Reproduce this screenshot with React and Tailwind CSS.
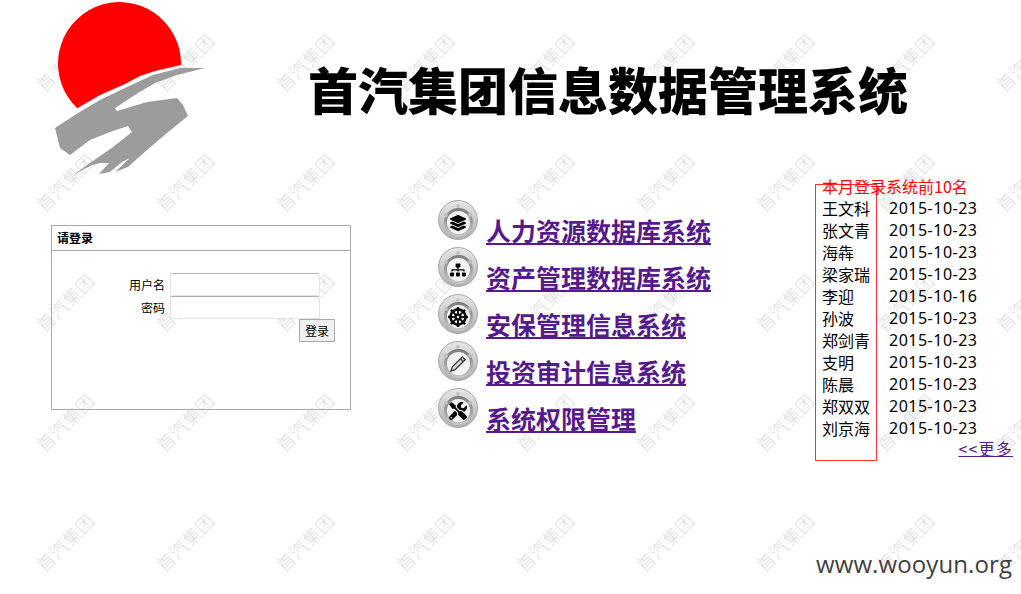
import { FaLayerGroup, FaSitemap, FaDharmachakra, FaTools } from 'react-icons/fa';

const cjk = "font-['Noto_Sans_CJK_SC','Noto_Sans',sans-serif]";

function PenGlyph() {
  return (
    <svg viewBox="0 0 20 20" width="19" height="19">
      <path d="M2 18l1.5-4.5L14 3l3 3L6.5 16.5z" fill="#d4d4d4" stroke="#3a3a3a" strokeWidth="1.4" />
      <path d="M12 5l3 3" stroke="#3a3a3a" strokeWidth="1.4" />
    </svg>
  );
}

const systems = [
  { name: '人力资源数据库系统', glyph: <FaLayerGroup size={16} /> },
  { name: '资产管理数据库系统', glyph: <FaSitemap size={16} /> },
  { name: '安保管理信息系统', glyph: <FaDharmachakra size={20} /> },
  { name: '投资审计信息系统', glyph: <PenGlyph /> },
  { name: '系统权限管理', glyph: <FaTools size={18} /> },
];

const logins = [
  ['王文科', '2015-10-23'],
  ['张文青', '2015-10-23'],
  ['海犇', '2015-10-23'],
  ['梁家瑞', '2015-10-23'],
  ['李迎', '2015-10-16'],
  ['孙波', '2015-10-23'],
  ['郑剑青', '2015-10-23'],
  ['支明', '2015-10-23'],
  ['陈晨', '2015-10-23'],
  ['郑双双', '2015-10-23'],
  ['刘京海', '2015-10-23'],
];

function Logo() {
  return (
    <svg viewBox="55 0 155 178" width="155" height="178" className="block shrink-0">
      <path
        d="M77.3 108.3A61.5 61.5 0 1 1 181 65L155 71 140 76 125 84 100 95Z"
        fill="#ff0000"
      />
      <path
        d="M205 68 177 75 155 83 138 93 115 108 117 111 147 102 177 98 183 105 188 116 167 133 147 150 128 167 115 172 130 158 122 162 110 172 99 174 109 163 100 163 92 165 73 175 90 163 113 147 132 132 128 126 110 132 90 140 70 155 60 148 55 128 78 113 100 100 127 87 153 75 180 68Z"
        fill="#9c9c9c"
      />
    </svg>
  );
}

function SystemIcon({ glyph }) {
  return (
    <div className="relative flex h-10 w-10 shrink-0 items-end justify-center rounded-full border border-[#a8a8a8] bg-gradient-to-b from-[#e6e6e6] to-[#b0b0b0] pb-[2px]">
      <span className="absolute left-[17px] top-[3px] h-[4px] w-[4px] rounded-full bg-[#c4c4c4]" />
      <span className="absolute left-[5px] top-[12px] h-[4px] w-[4px] rounded-full bg-[#bdbdbd]" />
      <span className="absolute right-[5px] top-[12px] h-[4px] w-[4px] rounded-full bg-[#bdbdbd]" />
      <div className="flex h-[29px] w-[29px] items-center justify-center rounded-full bg-gradient-to-b from-[#7c7c7c] to-[#c8c8c8]">
        <div className="flex h-[23px] w-[23px] items-center justify-center rounded-full bg-[#f2f2f2] text-black">
          {glyph}
        </div>
      </div>
    </div>
  );
}

function Watermark() {
  return (
    <div className="absolute left-[5px] top-[2px] grid grid-cols-[repeat(9,120px)] auto-rows-[120px]">
      {Array.from({ length: 45 }, (_, i) => (
        <div key={i} className="flex items-center justify-center">
          <span className={`-rotate-45 whitespace-nowrap text-[18px] font-light text-[#dedede] ${cjk}`}>
            首汽集团
          </span>
        </div>
      ))}
    </div>
  );
}

function LoginBox() {
  return (
    <div className={`mt-[47px] ml-[51px] h-[185px] w-[300px] shrink-0 border border-[#aaaaaa] text-[12px] text-black ${cjk}`}>
      <div className="flex h-[25px] items-center border-b border-[#aaaaaa] pl-[5px] font-bold">请登录</div>
      <div className="grid grid-cols-[113px_150px] gap-x-[5px] pt-[22px]">
        <label className="flex h-[23px] items-center justify-end">用户名</label>
        <input className="h-[23px] rounded-[2px] border border-[#e4e4e4] border-t-[#b0b0b0] bg-white" />
        <label className="flex h-[23px] items-center justify-end">密码</label>
        <input className="h-[23px] rounded-[2px] border border-[#e4e4e4] border-t-[#b0b0b0] bg-white" />
      </div>
      <button className="ml-[247px] block h-[23px] w-[36px] border border-[#aaaaaa] bg-[#f0f0f0] text-[12px]">登录</button>
    </div>
  );
}

function SystemList() {
  return (
    <ul className={`mt-[22px] ml-[87px] w-[340px] shrink-0 ${cjk}`}>
      {systems.map(({ name, glyph }) => (
        <li key={name} className="flex h-[47px] items-start gap-2">
          <SystemIcon glyph={glyph} />
          <a href="#" className="mt-[13px] text-[25px] font-bold leading-[34px] text-[#551a8b] underline">
            {name}
          </a>
        </li>
      ))}
    </ul>
  );
}

function TopLogins() {
  return (
    <div className={`relative ml-[37px] h-[285px] w-[198px] shrink-0 text-[16px] ${cjk}`}>
      <div className="absolute left-0 top-[6px] h-[277px] w-[62px] border border-[#ff3030]" />
      <p className="absolute left-[7px] top-[-1px] leading-[18px] text-[#ff0000]">本月登录系统前10名</p>
      <div className="grid grid-cols-[67px_auto] pl-[7px] pt-[18px] text-black">
        {logins.map(([name, date], i) => (
          <div key={i} className="col-span-2 grid h-[22px] grid-cols-subgrid items-center">
            <span>{name}</span>
            <span className="font-['Noto_Sans',sans-serif] tracking-[0.5px]">{date}</span>
          </div>
        ))}
      </div>
      <a href="#" className="absolute right-0 top-[259px] text-[16px] leading-[22px] tracking-[1.2px] text-[#551a8b] underline">
        &lt;&lt;更多
      </a>
    </div>
  );
}

export default function App() {
  return (
    <div className="relative h-[594px] w-[1021px] overflow-hidden bg-white">
      <Watermark />
      <div className="relative">
        <header className="flex h-[178px] items-start">
          <div className="ml-[55px]"><Logo /></div>
          <h1 className={`ml-[98px] mt-[56px] whitespace-nowrap text-[50px] font-black leading-[64px] text-black ${cjk}`}>
            首汽集团信息数据管理系统
          </h1>
        </header>
        <main className="flex items-start">
          <LoginBox />
          <SystemList />
          <TopLogins />
        </main>
      </div>
      <span className="absolute left-[816px] top-[546px] font-['Open_Sans',sans-serif] text-[24px] tracking-[0.1px] text-[#3f3f3f]">
        www.wooyun.org
      </span>
    </div>
  );
}
